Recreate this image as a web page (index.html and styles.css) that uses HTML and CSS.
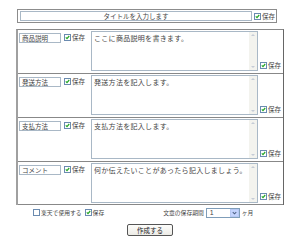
FILE: index.html
```html
<!DOCTYPE html>
<html lang="ja">
<head>
<meta charset="utf-8">
<link rel="stylesheet" href="styles.css">
</head>
<body>
<div class="page">
  <div class="title-box">
    <div class="title-input">タイトルを入力します</div>
    <span class="cb on"><svg viewBox="0 0 5 5"><polyline points="0.8,2.4 2,3.7 4.2,1"/></svg></span>
    <span class="save">保存</span>
  </div>

  <div class="form-box">
    <div class="row">
      <div class="label-input">商品説明</div>
      <span class="cb on"><svg viewBox="0 0 5 5"><polyline points="0.8,2.4 2,3.7 4.2,1"/></svg></span>
      <span class="save">保存</span>
      <div class="ta"><div class="ta-text">ここに商品説明を書きます。</div><div class="sb"><span class="up"></span><span class="dn"></span></div></div>
      <div class="save-col"><span class="cb on"><svg viewBox="0 0 5 5"><polyline points="0.8,2.4 2,3.7 4.2,1"/></svg></span><span class="save">保存</span></div>
    </div>
    <div class="row">
      <div class="label-input">発送方法</div>
      <span class="cb on"><svg viewBox="0 0 5 5"><polyline points="0.8,2.4 2,3.7 4.2,1"/></svg></span>
      <span class="save">保存</span>
      <div class="ta"><div class="ta-text">発送方法を記入します。</div><div class="sb"><span class="up"></span><span class="dn"></span></div></div>
      <div class="save-col"><span class="cb on"><svg viewBox="0 0 5 5"><polyline points="0.8,2.4 2,3.7 4.2,1"/></svg></span><span class="save">保存</span></div>
    </div>
    <div class="row">
      <div class="label-input">支払方法</div>
      <span class="cb on"><svg viewBox="0 0 5 5"><polyline points="0.8,2.4 2,3.7 4.2,1"/></svg></span>
      <span class="save">保存</span>
      <div class="ta"><div class="ta-text">支払方法を記入します。</div><div class="sb"><span class="up"></span><span class="dn"></span></div></div>
      <div class="save-col"><span class="cb on"><svg viewBox="0 0 5 5"><polyline points="0.8,2.4 2,3.7 4.2,1"/></svg></span><span class="save">保存</span></div>
    </div>
    <div class="row">
      <div class="label-input">コメント</div>
      <span class="cb on"><svg viewBox="0 0 5 5"><polyline points="0.8,2.4 2,3.7 4.2,1"/></svg></span>
      <span class="save">保存</span>
      <div class="ta"><div class="ta-text">何か伝えたいことがあったら記入しましょう。</div><div class="sb"><span class="up"></span><span class="dn"></span></div></div>
      <div class="save-col"><span class="cb on"><svg viewBox="0 0 5 5"><polyline points="0.8,2.4 2,3.7 4.2,1"/></svg></span><span class="save">保存</span></div>
    </div>
  </div>

  <div class="options">
    <div class="opt-left">
      <span class="cb"></span><span class="small">楽天で使用する</span>
      <span class="cb on"><svg viewBox="0 0 5 5"><polyline points="0.8,2.4 2,3.7 4.2,1"/></svg></span><span class="small">保存</span>
    </div>
    <div class="opt-right">
      <span class="small">文章の保存期間</span>
      <div class="select"><span class="sel-val">1</span><span class="sel-btn"><svg viewBox="0 0 8 8"><polyline points="2,3 4,5 6,3"/></svg></span></div>
      <span class="small">ヶ月</span>
    </div>
  </div>

  <div class="submit"><div class="btn">作成する</div></div>
</div>
</body>
</html>
```

FILE: styles.css
```css
* { box-sizing: border-box; }
html, body { margin: 0; padding: 0; background: #fff; }
body {
  font-family: "Noto Sans CJK JP", "Noto Sans", sans-serif;
  color: #444;
  font-size: 6.5px;
  line-height: 1;
  width: 300px;
  height: 242px;
  overflow: hidden;
}
.page { padding-top: 9px; }

.title-box {
  margin-left: 17px;
  width: 260px;
  height: 14px;
  border: 1px solid #8c8c8c;
  display: flex;
  align-items: center;
  padding-left: 2px;
}
.title-input {
  width: 232px;
  height: 10px;
  border: 1px solid #a9b8c6;
  text-align: center;
  font-size: 6.5px;
  line-height: 8px;
  color: #444;
  margin-right: 2px;
}
.cb {
  width: 7px;
  height: 7px;
  border: 1px solid #6b8bb0;
  background: #fff;
  display: inline-flex;
  flex: none;
  align-items: center;
  justify-content: center;
}
.cb svg { width: 5px; height: 5px; display: none; }
.cb.on svg { display: block; }
.cb svg polyline { fill: none; stroke: #26a826; stroke-width: 1.2; }
.save { margin-left: 1px; font-size: 6.5px; color: #444; }

.form-box {
  margin-top: 6px;
  margin-left: 16px;
  width: 268px;
  border-top: 1px solid #888;
  border-left: 2px solid #a0a0a0;
  border-right: 1px solid #666;
}
.row {
  height: 44px;
  border-bottom: 1px solid #888;
  display: flex;
  align-items: flex-start;
  padding: 1px 0 0 1px;
}
.row:last-child { height: 43px; }
.label-input {
  width: 42px;
  height: 10px;
  margin-top: 2px;
  border: 1px solid #a9b8c6;
  padding-left: 2px;
  font-size: 6.5px;
  line-height: 8px;
  color: #444;
  margin-right: 3px;
}
.row > .cb { margin-top: 3px; }
.row > .save { margin-top: 3px; line-height: 7px; }
.ta {
  margin-left: 6px;
  width: 167px;
  height: 40px;
  border: 1px solid #a9b8c6;
  display: flex;
}
.ta-text {
  flex: 1;
  padding: 2px 0 0 2px;
  font-size: 7px;
  letter-spacing: 0.3px;
  line-height: 8px;
  color: #444;
}
.sb {
  width: 8px;
  background: #f3f3ee;
  display: flex;
  flex-direction: column;
  justify-content: space-between;
  align-items: center;
  padding: 2px 0;
}
.sb span {
  width: 0; height: 0;
  border-left: 2px solid transparent;
  border-right: 2px solid transparent;
}
.sb .up { border-bottom: 2px solid #c5ccd6; }
.sb .dn { border-top: 2px solid #c5ccd6; }
.save-col {
  align-self: flex-end;
  margin-bottom: 4px;
  margin-left: 2px;
  display: flex;
  align-items: center;
}

.options {
  margin-top: 2px;
  display: flex;
  align-items: center;
  height: 11px;
}
.opt-left { margin-left: 33px; display: flex; align-items: center; }
.opt-left .small { margin-left: 1px; margin-right: 3px; }
.opt-right { margin-left: 56px; display: flex; align-items: center; }
.small { font-size: 5.8px; color: #444; }
.select {
  margin-left: 2px;
  width: 34px;
  height: 10px;
  border: 1px solid #7f9db9;
  display: flex;
  align-items: center;
  margin-right: 2px;
}
.sel-val { flex: 1; padding-left: 3px; font-size: 7px; font-family: "Liberation Sans", sans-serif; }
.sel-btn {
  width: 9px;
  height: 8px;
  background: #c3d3fd;
  border: 1px solid #b6c8f3;
  display: flex;
  align-items: center;
  justify-content: center;
}
.sel-btn svg { width: 8px; height: 8px; }
.sel-btn polyline { fill: none; stroke: #4d6185; stroke-width: 1.2; }

.submit {
  margin-top: 6px;
  display: flex;
  justify-content: center;
}
.btn {
  width: 46px;
  height: 12px;
  border: 1px solid #555;
  border-radius: 2px;
  background: linear-gradient(#fdfdfb, #ecebe6);
  font-size: 6.5px;
  line-height: 10px;
  text-align: center;
  color: #222;
}
```
